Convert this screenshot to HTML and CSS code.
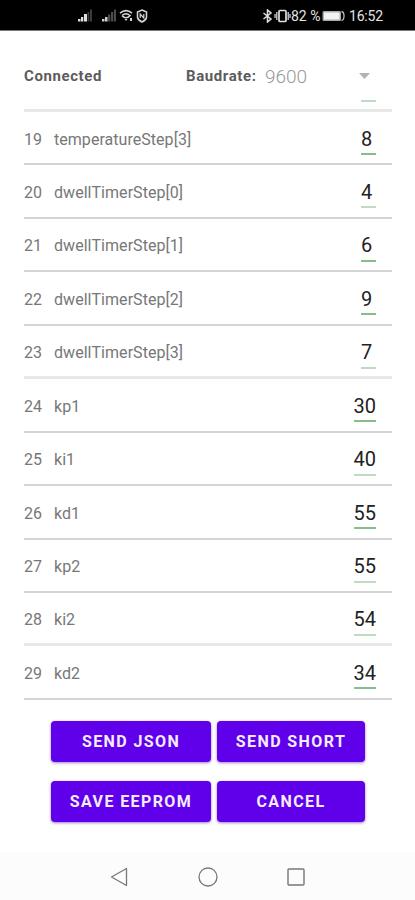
FILE: index.html
```html
<!DOCTYPE html>
<html lang="en">
<head>
  <meta charset="UTF-8" />
  <meta name="viewport" content="width=device-width, initial-scale=1.0"/>
  <title>Controller Settings</title>
  <link rel="stylesheet" href="styles.css">
</head>
<body>
  <div class="status-bar">
    <div class="status-left">
      <svg class="signal" width="16" height="14" viewBox="0 0 16 14">
        <path d="M1 10h2.5v2.5H1zM4 8h2.3v4.5H4zM7 5h3v7.5H7z" fill="#ddd"/>
        <path d="M10.5 3h1.8v9.5h-1.8zM13 .5h2v12h-2z" fill="#3c3c3c"/>
      </svg>
      <svg class="signal" width="16" height="14" viewBox="0 0 16 14">
        <path d="M1 10h2.5v2.5H1zM4 8h2.5v4.5H4z" fill="#ccc"/>
        <path d="M7 5.5h2.3v7H7zM10 3h2.3v9.5H10zM13 .5h2v12h-2z" fill="#4a4a4a"/>
      </svg>
      <svg class="wifi" width="15" height="14" viewBox="0 0 15 14">
        <path d="M1 4.2Q7-1 13 4.2M3 6.5Q7 3 11 6.5Q7 11 3 6.5" fill="none" stroke="#d5d5d5" stroke-width="1.6"/>
        <path d="M5.5 10h3l-1.5 2zM11 9h2v3h-2z" fill="#d5d5d5"/>
      </svg>
      <svg width="12" height="14" viewBox="0 0 12 14">
        <path d="M6 1L10.5 3V8.5Q10 11 6 13Q2 11 1.5 8.5V3Z" fill="none" stroke="#d5d5d5" stroke-width="1.5"/>
        <path d="M4.2 9V5L7.8 9V5" fill="none" stroke="#d5d5d5" stroke-width="1.2"/>
      </svg>
    </div>
    <div class="status-right">
      <svg width="11" height="14" viewBox="0 0 11 14">
        <path d="M1.5 4L9 10L5.5 13V1L9 4L1.5 10" fill="none" stroke="#e0e0e0" stroke-width="1.5"/>
      </svg>
      <svg class="vibrate" width="17" height="14" viewBox="0 0 17 14">
        <rect x="5" y="1.5" width="7" height="11" rx="1" fill="none" stroke="#e0e0e0" stroke-width="1.7"/>
        <path d="M2.8 3v8M14.2 3v8M1 5v4M16 5v4" stroke="#e0e0e0" stroke-width="1.2"/>
      </svg>
      <span class="percent">82 %</span>
      <svg class="battery" width="23" height="12" viewBox="0 0 23 12">
        <rect x=".5" y="1" width="18.5" height="10" rx="1.5" fill="#aaa"/>
        <rect x="2" y="2.5" width="15.5" height="7" fill="#f2f2f2"/>
        <path d="M19.5 1.5Q22 2 22 6T19.5 10.5" fill="none" stroke="#bbb" stroke-width="1.3"/>
      </svg>
      <span class="clock">16:52</span>
    </div>
  </div>

  <div class="toolbar">
    <span class="state">Connected</span>
    <span class="baud-label">Baudrate:</span>
    <span class="baud-value">9600</span>
    <svg class="caret" width="11" height="6" viewBox="0 0 11 6"><path d="M0 0h11L5.5 6z" fill="#b3b3b3"/></svg>
  </div>

  <div class="params">
    <!-- tail of the row scrolled under the toolbar -->
    <div class="row row-cut soft"><span class="value"></span></div>
    <div class="row"><span class="num">19</span><span class="name">temperatureStep[3]</span><span class="value">8</span></div>
    <div class="row soft-line"><span class="num">20</span><span class="name">dwellTimerStep[0]</span><span class="value">4</span></div>
    <div class="row"><span class="num">21</span><span class="name">dwellTimerStep[1]</span><span class="value">6</span></div>
    <div class="row"><span class="num">22</span><span class="name">dwellTimerStep[2]</span><span class="value">9</span></div>
    <div class="row soft"><span class="num">23</span><span class="name">dwellTimerStep[3]</span><span class="value">7</span></div>
    <div class="row"><span class="num">24</span><span class="name">kp1</span><span class="value">30</span></div>
    <div class="row soft-line"><span class="num">25</span><span class="name">ki1</span><span class="value">40</span></div>
    <div class="row"><span class="num">26</span><span class="name">kd1</span><span class="value">55</span></div>
    <div class="row soft-line"><span class="num">27</span><span class="name">kp2</span><span class="value">55</span></div>
    <div class="row soft"><span class="num">28</span><span class="name">ki2</span><span class="value">54</span></div>
    <div class="row"><span class="num">29</span><span class="name">kd2</span><span class="value">34</span></div>
  </div>

  <div class="actions">
    <button>SEND JSON</button>
    <button>SEND SHORT</button>
    <button>SAVE EEPROM</button>
    <button>CANCEL</button>
  </div>

  <div class="nav-bar">
    <svg width="20" height="20" viewBox="0 0 20 20"><path d="M16.5 1.5v17L1.5 10z" fill="none" stroke="#777" stroke-width="1.3" stroke-linejoin="round"/></svg>
    <svg width="20" height="20" viewBox="0 0 20 20"><circle cx="10" cy="10" r="9" fill="none" stroke="#777" stroke-width="1.3"/></svg>
    <svg width="20" height="20" viewBox="0 0 20 20"><rect x="2" y="2" width="16" height="16" rx="1" fill="none" stroke="#777" stroke-width="1.4"/></svg>
  </div>
</body>
</html>
```

FILE: styles.css
```css
* { box-sizing: border-box; }

body {
  font-family: Roboto, 'Liberation Sans', sans-serif;
  margin: 0;
  height: 900px;
  display: flex;
  flex-direction: column;
  background-color: #fff;
  color: #777;
  overflow: hidden;
}

svg {
  display: block;
  flex: none;
}

.status-bar {
  height: 31px;
  flex: none;
  display: flex;
  justify-content: space-between;
  align-items: center;
  padding: 2px 33px 0 77px;
  background-color: #000;
  border-bottom: 1px solid #777;
  color: #e4e4e4;
}

.status-left,
.status-right {
  display: flex;
  align-items: center;
}

.signal { margin-right: 8px; }
.signal + .wifi { margin-left: -6px; }
.wifi { margin-right: 2px; }
.vibrate { margin-left: 1px; }

.percent {
  font-size: 14px;
  width: 31px;
  white-space: nowrap;
}

.clock {
  font-size: 14px;
  margin-left: 4px;
  width: 33px;
  letter-spacing: -0.2px;
}

.toolbar {
  height: 67px;
  flex: none;
  display: flex;
  align-items: center;
  padding: 23px 45px 0 24px;
}

.state,
.baud-label {
  font-size: 15px;
  font-weight: 700;
  color: #5c5c5c;
  letter-spacing: 0.6px;
}

.state { width: 162px; }
.baud-label { width: 79px; }

.baud-value {
  font-size: 19px;
  font-weight: 300;
  color: #999;
}

.caret { margin-left: auto; }

.params {
  padding: 0 23px 0 24px;
  flex: none;
}

.row {
  height: 53.45px;
  display: flex;
  align-items: flex-start;
  padding: 15.5px 16px 0 0;
  border-bottom: 2px solid #d4d4d4;
  font-size: 16px;
  line-height: 24px;
  letter-spacing: 0.04px;
}

.row-cut {
  height: 14px;
  padding-top: 0;
}

.row-cut .value {
  height: 4px;
  min-width: 15px;
}

.row.soft { border-bottom: 3px solid #e8e8e8; }

.num { width: 30px; }

.value {
  margin-left: auto;
  height: 27.5px;
  min-width: 15px;
  border-bottom: 2px solid #87bd8b;
  font-size: 20px;
  line-height: 23px;
  letter-spacing: 0;
  color: #222;
}

.soft .value,
.soft-line .value {
  border-bottom-color: #bfdcc1;
}

.actions {
  flex: none;
  display: grid;
  grid-template-columns: 160px 148px;
  gap: 19px 6px;
  padding: 21px 0 0 51px;
}

button {
  height: 41px;
  padding: 0;
  border: none;
  border-radius: 4px;
  background-color: #6000ea;
  box-shadow: 0 1px 3px rgba(60, 0, 160, 0.5);
  color: #f4ecff;
  font-family: inherit;
  font-size: 16px;
  font-weight: 700;
  letter-spacing: 1.4px;
}

.nav-bar {
  height: 48px;
  margin-top: auto;
  flex: none;
  display: flex;
  gap: 68px;
  padding: 15px 0 0 110px;
  background-color: #fcfcfc;
}
```
